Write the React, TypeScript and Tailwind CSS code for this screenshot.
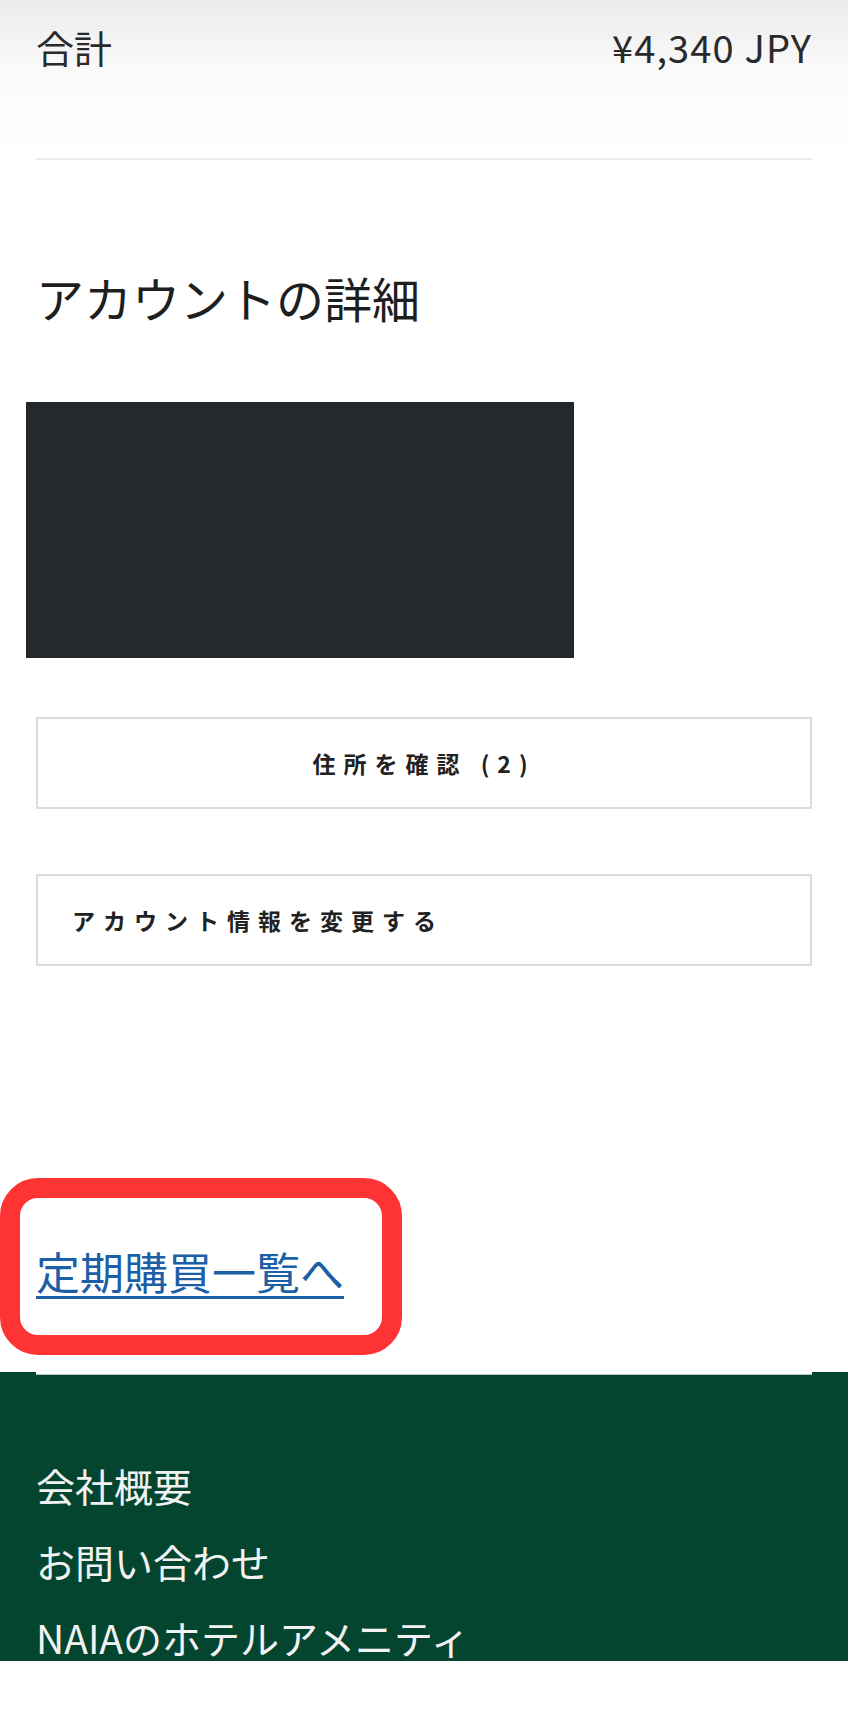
import React from 'react';

const footerLinks = ['会社概要', 'お問い合わせ', 'NAIAのホテルアメニティ'];

export default function App() {
  return (
    <div
      className="relative min-h-[1714px] w-[858px] bg-white text-[#222]"
      style={{ fontFamily: '"Noto Sans CJK JP", "Noto Sans", sans-serif' }}
    >
      <div className="w-[848px]">
        {/* total row */}
        <div className="bg-gradient-to-b from-[#ebebeb] via-[#fafafa] via-45% to-white px-9 pt-[23px] pb-[87px]">
          <div className="flex items-center justify-between text-[38px] leading-[48px] text-[#2a2a2a]">
            <span>合計</span>
            <span className="tracking-[0.03em]">¥4,340 JPY</span>
          </div>
        </div>
        <div className="px-9">
          <div className="h-[2px] bg-[#ebebeb]" />

          <h2 className="mt-[107px] text-[48px] leading-[60px] font-normal text-[#1e1e1e]">
            アカウントの詳細
          </h2>

          {/* account info (masked) */}
          <div className="mt-[75px] -ml-[10px] h-[256px] w-[548px] bg-[#25282d]" />

          <button className="mt-[59px] flex h-[92px] w-full items-center justify-center border-2 border-[#dcdcdc] bg-white text-[23px] font-bold tracking-[8px] text-[#222]">
            住所を確認 (2)
          </button>

          <button className="mt-[65px] flex h-[92px] w-full items-center border-2 border-[#dcdcdc] bg-white pl-[34px] text-[23px] font-bold tracking-[8px] text-[#222]">
            アカウント情報を変更する
          </button>

          <a
            href="#"
            className="mt-[277px] block w-fit text-[44px] leading-[56px] text-[#1d5fa6] underline decoration-[3px] underline-offset-[6px]"
          >
            定期購買一覧へ
          </a>
        </div>

        {/* footer */}
        <footer className="mt-[73px] bg-[#044530] pb-[3px]">
          <div className="mx-9 h-[3px] border-b border-[#b9c6c0] bg-white" />
          <ul className="flex flex-col gap-[34px] px-9 pt-[89px] text-[39px] leading-[42px] text-[#f2f2f2]">
            {footerLinks.map((label) => (
              <li key={label}>{label}</li>
            ))}
          </ul>
        </footer>
      </div>

      {/* red highlight annotation */}
      <div className="absolute left-0 top-[1178px] h-[177px] w-[402px] rounded-[38px] border-[20px] border-[#fe3434]" />
    </div>
  );
}
